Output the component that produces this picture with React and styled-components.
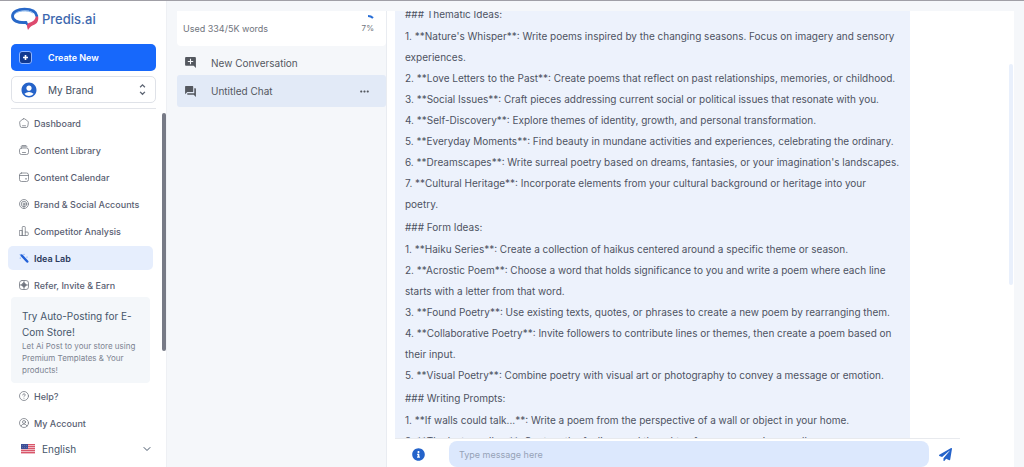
import React from "react";
import styled, { createGlobalStyle } from "styled-components";
import { MdAccountCircle, MdAddComment, MdForum, MdMoreHoriz, MdUnfoldMore } from "react-icons/md";
import { FaInfoCircle, FaPaperPlane } from "react-icons/fa";
import { ChevronDown } from "lucide-react";

const GlobalStyle = createGlobalStyle`
  *, *::before, *::after { box-sizing: border-box; }
  body { margin: 0; background: #f5f7fa; }
  body, button, input, select { font-family: Inter, "Liberation Sans", sans-serif; }
  svg { display: block; flex: none; }
`;

const Page = styled.div`
  display: flex;
  height: 100vh;
  overflow: hidden;
  border-top: 1px solid #a09fa6;
  color: #4d5566;
`;

const Sidebar = styled.aside`
  flex: none;
  width: 167px;
  display: flex;
  flex-direction: column;
  background: #fff;
  border-right: 1px solid #eef0f4;
`;

const SidebarTop = styled.div`
  display: flex;
  flex-direction: column;
  gap: 5px;
  margin: 0 10px 0 11px;
  padding: 6px 0 5px;
  border-bottom: 1px solid #e3e5ea;
`;

const Logo = styled.a`
  display: flex;
  align-items: center;
  gap: 3px;
  height: 24px;
  margin-bottom: 8px;
  color: #3d68ae;
  font-size: 13px;
  font-weight: 500;
  text-decoration: none;
`;

const CreateButton = styled.button`
  display: flex;
  align-items: center;
  gap: 16px;
  height: 27px;
  padding: 0 8px;
  border: 0;
  border-radius: 5px;
  background: #1768fb;
  color: #fff;
  font-size: 9px;
  font-weight: 600;
`;

const BrandButton = styled.button`
  display: flex;
  align-items: center;
  gap: 10px;
  height: 27px;
  padding: 0 5px 0 8px;
  border: 1px solid #dfe2e8;
  border-radius: 5px;
  background: #fff;
  color: #424e60;
  font-size: 10px;
`;

const Grow = styled.span`
  flex: 1;
  text-align: left;
`;

const SidebarBody = styled.div`
  flex: 1;
  display: flex;
  justify-content: space-between;
  min-height: 0;
`;

const SidebarColumn = styled.div`
  flex: 1;
  display: flex;
  flex-direction: column;
  padding: 2px 9px 0 8px;
`;

const Nav = styled.nav`
  display: flex;
  flex-direction: column;
  gap: 3px;
`;

const NavLink = styled.a`
  display: flex;
  align-items: center;
  gap: 5px;
  height: 24px;
  padding-left: 11px;
  border-radius: 5px;
  background: ${(p) => (p.$active ? "#e6eefd" : "transparent")};
  color: ${(p) => (p.$active ? "#2b3a5c" : "#596072")};
  font-size: 9px;
  font-weight: ${(p) => (p.$active ? 600 : 500)};
  text-decoration: none;
  white-space: nowrap;
`;

const Promo = styled.section`
  margin: 0 3px 1px;
  padding: 11px 11px 7px;
  border-radius: 4px;
  background: #f4f7fa;
  white-space: nowrap;
`;

const PromoTitle = styled.h2`
  margin: 0;
  color: #46566a;
  font-size: 10px;
  font-weight: 400;
  line-height: 16px;
`;

const PromoText = styled.p`
  margin: 0;
  color: #7c8391;
  font-size: 8px;
  line-height: 12px;
`;

const Language = styled.label`
  display: flex;
  align-items: center;
  gap: 7px;
  height: 27px;
  padding-left: 13px;
  color: #46566a;
`;

const LanguageSelect = styled.select`
  flex: 1;
  padding: 0;
  border: 0;
  appearance: none;
  background: transparent;
  color: inherit;
  font-size: 10px;
`;

const Rail = styled.div`
  flex: none;
  width: 4px;
  height: ${(p) => p.$height};
  margin-top: ${(p) => p.$top};
  border-radius: 2px;
  background: ${(p) => p.$color};
`;

const Main = styled.main`
  flex: 1;
  min-width: 0;
  display: flex;
  padding: 10px 10px 0;
`;

const Conversations = styled.section`
  flex: none;
  width: 210px;
  border-right: 1px solid #e9ecf1;
`;

const Usage = styled.div`
  display: flex;
  justify-content: space-between;
  height: 35px;
  margin-bottom: 4px;
  padding: 4px 12px 0 6px;
  border-radius: 0 0 4px 4px;
  background: #fff;
  color: #70747d;
  font-size: 9px;
`;

const UsageLabel = styled.span`
  padding-top: 8px;
  line-height: 12px;
`;

const UsageMeter = styled.div`
  display: flex;
  flex-direction: column;
  align-items: flex-end;
  gap: 3px;
  font-size: 8px;
  line-height: 12px;
`;

const ConversationRow = styled.div`
  display: flex;
  align-items: center;
  height: ${(p) => (p.$selected ? "32px" : "25px")};
  padding: 0 15px 0 7px;
  border-radius: 3px;
  background: ${(p) => (p.$selected ? "#e2eaf7" : "transparent")};
  color: #54585f;
`;

const ConversationButton = styled.button`
  flex: 1;
  display: flex;
  align-items: center;
  gap: 14px;
  padding: 0;
  border: 0;
  background: none;
  color: inherit;
  font-size: 10px;
`;

const IconButton = styled.button`
  display: flex;
  padding: 0;
  border: 0;
  background: none;
  color: ${(p) => p.$color};
`;

const Chat = styled.section`
  flex: 1;
  min-width: 0;
  display: flex;
  flex-direction: column;
  background: #fff;
`;

const Messages = styled.div`
  flex: 1;
  min-height: 0;
  display: flex;
  justify-content: space-between;
  padding: 0 1px 0 8px;
  overflow: hidden;
`;

const Bubble = styled.article`
  flex: 0 1 515px;
  display: flex;
  flex-direction: column;
  gap: 1px;
  margin-top: -8px;
  padding: 0 10px;
  background: #edf2fc;
  color: #4d5362;
  font-size: 10px;
  line-height: 21px;
  white-space: nowrap;
`;

const Topic = styled.section`
  flex: none;
`;

const TopicTitle = styled.h3`
  margin: 0;
  padding: 1px 0;
  font-size: inherit;
  font-weight: 400;
`;

const Line = styled.p`
  margin: 0;
  white-space: pre-line;
`;

const Composer = styled.form`
  display: flex;
  align-items: center;
  gap: 10px;
  margin: 0 54px 0 8px;
  padding: 2px 8px 0 17px;
  border-top: 1px solid #e8eaee;
`;

const MessageInput = styled.input`
  flex: 1;
  min-width: 0;
  height: 26px;
  margin-left: 14px;
  padding: 0 10px;
  border: 0;
  border-radius: 8px;
  background: #dce8fd;
  color: #4d5362;
  font-size: 9px;
  &::placeholder { color: #96a2b7; opacity: 1; }
`;

const PredisMark = () => (
  <svg width="28" height="24" viewBox="0 0 28 24" fill="none" aria-hidden="true">
    <path d="M15 15.500C6 16 1.500 13.500 1.500 9C1.500 4.500 7 2.200 13.500 2.200C20 2.200 25 4.500 25.800 9" stroke="#2868c8" strokeWidth="2.800" strokeLinecap="round" />
    <path d="M3 8C5 3.500 17 2.500 22 6" stroke="#7fb0ea" strokeWidth="1" />
    <path d="M8 15L14.500 15.500L17.500 18.500" stroke="#2868c8" strokeWidth="2.200" strokeLinecap="round" strokeLinejoin="round" />
    <path d="M27.200 9.500C28 15.500 24.500 17.500 21.500 18.500C19.500 19.300 18.500 21 17 23C16.300 20.500 15.500 18.500 16.500 17C18.500 14.500 23.500 16 24.800 9.500Z" fill="#dd4a6e" />
  </svg>
);

const PlusTile = () => (
  <svg width="13" height="13" viewBox="0 0 13 13" aria-hidden="true">
    <rect x="0.500" y="0.500" width="12" height="12" rx="2.500" fill="#11398f" stroke="#8fb5ff" />
    <path d="M6.500 4v5M4 6.500h5" stroke="#fff" strokeWidth="1.600" />
  </svg>
);

const Glyph = ({ children }) => (
  <svg width="10" height="10" viewBox="0 0 20 20" fill="none" stroke="#70757f" strokeWidth="1.500" strokeLinecap="round" strokeLinejoin="round" aria-hidden="true">
    {children}
  </svg>
);

const glyphs = {
  home: <path d="M8.500 1.800L2.500 6.200Q1 7.500 1.300 9.500L2.300 16Q2.800 19 5.500 19h9Q17.200 19 17.700 16l1-6.500Q19 7.500 17.500 6.200L11.500 1.800Q10 .8 8.500 1.800ZM7 15.500h6" />,
  library: <><path d="M6 1h8M4 3.500h12" /><path d="M5 6h10q4 0 4 4v5q0 4-4 4H5q-4 0-4-4v-5q0-4 4-4ZM7 15h6" /></>,
  calendar: <><rect x="1" y="2" width="18" height="17" rx="4" /><path d="M1 7h18" /><path d="M13.500 13.500h1" strokeWidth="2.500" /></>,
  target: <><circle cx="10" cy="10" r="9" /><circle cx="10" cy="10" r="5.500" /><circle cx="10" cy="10" r="2" /><path d="M10 12v7" /></>,
  bars: <path d="M1.500 9h5v10h-5ZM6.500 19V2.500q0-1.500 1.500-1.500h3q1.500 0 1.500 1.500V19M12.500 12h4q2 0 2 2v3q0 2-2 2h-10" />,
  wand: <><path d="M5.500 5L16.500 17" stroke="#2261d8" strokeWidth="5" /><path d="M2.500 3v.1M10 2.500v.1M2.500 10v.1M16 8v.1" stroke="#6fa0f4" strokeWidth="2.500" /></>,
  gift: <><rect x="1" y="1" width="18" height="18" rx="5" /><path d="M10 1v18M1 10h18" /><path d="M10 5L15 10L10 15L5 10Z" fill="#70757f" /></>,
  help: <><circle cx="10" cy="10" r="9" /><path d="M7.500 8q0-2.500 2.500-2.500T12.500 8Q12.500 9.500 10 11M10 14.500v.1" /></>,
  account: <><circle cx="10" cy="10" r="9" /><circle cx="10" cy="8" r="3" /><path d="M4 16q2-4 6-4t6 4" /></>,
};

const Flag = () => (
  <svg width="14" height="10" viewBox="0 0 14 10" aria-hidden="true">
    <rect width="14" height="10" fill="#eeb9c2" />
    <path d="M0 .5h14M0 2.500h14M0 4.500h14M0 6.500h14M0 8.500h14" stroke="#d9566a" />
    <rect width="7" height="5" fill="#3c4f96" />
    <path d="M1 1.500h5M1 3.500h5" stroke="#7582ba" strokeWidth=".6" strokeDasharray="1 1" />
  </svg>
);

const navItems = [
  ["home", "Dashboard"],
  ["library", "Content Library"],
  ["calendar", "Content Calendar"],
  ["target", "Brand & Social Accounts"],
  ["bars", "Competitor Analysis"],
  ["wand", "Idea Lab"],
  ["gift", "Refer, Invite & Earn"],
];

const topics = [
  {
    title: "### Thematic Ideas:",
    lines: [
      "1. **Nature's Whisper**: Write poems inspired by the changing seasons. Focus on imagery and sensory\nexperiences.",
      "2. **Love Letters to the Past**: Create poems that reflect on past relationships, memories, or childhood.",
      "3. **Social Issues**: Craft pieces addressing current social or political issues that resonate with you.",
      "4. **Self-Discovery**: Explore themes of identity, growth, and personal transformation.",
      "5. **Everyday Moments**: Find beauty in mundane activities and experiences, celebrating the ordinary.",
      "6. **Dreamscapes**: Write surreal poetry based on dreams, fantasies, or your imagination's landscapes.",
      "7. **Cultural Heritage**: Incorporate elements from your cultural background or heritage into your\npoetry.",
    ],
  },
  {
    title: "### Form Ideas:",
    lines: [
      "1. **Haiku Series**: Create a collection of haikus centered around a specific theme or season.",
      "2. **Acrostic Poem**: Choose a word that holds significance to you and write a poem where each line\nstarts with a letter from that word.",
      "3. **Found Poetry**: Use existing texts, quotes, or phrases to create a new poem by rearranging them.",
      "4. **Collaborative Poetry**: Invite followers to contribute lines or themes, then create a poem based on\ntheir input.",
      "5. **Visual Poetry**: Combine poetry with visual art or photography to convey a message or emotion.",
    ],
  },
  {
    title: "### Writing Prompts:",
    lines: [
      "1. **If walls could talk...**: Write a poem from the perspective of a wall or object in your home.",
      "2. **The last goodbye**: Capture the feelings and thoughts of someone saying goodbye.",
    ],
  },
];

export default function App() {
  return (
    <>
      <GlobalStyle />
      <Page>
        <Sidebar>
          <SidebarTop>
            <Logo href="#"><PredisMark />Predis.ai</Logo>
            <CreateButton type="button"><PlusTile />Create New</CreateButton>
            <BrandButton type="button">
              <MdAccountCircle size={18} color="#2563c9" />
              <Grow>My Brand</Grow>
              <MdUnfoldMore size={15} color="#5d6573" />
            </BrandButton>
          </SidebarTop>
          <SidebarBody>
            <SidebarColumn>
              <Nav aria-label="Main">
                {navItems.map(([icon, label]) => (
                  <NavLink href="#" key={label} $active={icon === "wand"}>
                    <Glyph>{glyphs[icon]}</Glyph>{label}
                  </NavLink>
                ))}
              </Nav>
              <Promo>
                <PromoTitle>Try Auto-Posting for E-<br />Com Store!</PromoTitle>
                <PromoText>Let Ai Post to your store using<br />Premium Templates &amp; Your<br />products!</PromoText>
              </Promo>
              <Nav aria-label="Support">
                <NavLink href="#"><Glyph>{glyphs.help}</Glyph>Help?</NavLink>
                <NavLink href="#"><Glyph>{glyphs.account}</Glyph>My Account</NavLink>
              </Nav>
              <Language>
                <Flag />
                <LanguageSelect aria-label="Language" defaultValue="English">
                  <option>English</option>
                </LanguageSelect>
                <ChevronDown size={12} />
              </Language>
            </SidebarColumn>
            <Rail $height="238px" $top="4px" $color="#777a86" />
          </SidebarBody>
        </Sidebar>
        <Main>
          <Conversations>
            <Usage>
              <UsageLabel>Used 334/5K words</UsageLabel>
              <UsageMeter>
                <svg width="6" height="4" viewBox="0 0 6 4" aria-hidden="true">
                  <path d="M0 1Q3 1 5 3" fill="none" stroke="#2a6fd6" strokeWidth="2" />
                </svg>
                7%
              </UsageMeter>
            </Usage>
            <ConversationRow>
              <ConversationButton type="button"><MdAddComment size={13} />New Conversation</ConversationButton>
            </ConversationRow>
            <ConversationRow $selected>
              <ConversationButton type="button"><MdForum size={13} />Untitled Chat</ConversationButton>
              <IconButton type="button" aria-label="More" $color="#54585f"><MdMoreHoriz size={13} /></IconButton>
            </ConversationRow>
          </Conversations>
          <Chat>
            <Messages>
              <Bubble>
                {topics.map((topic) => (
                  <Topic key={topic.title}>
                    <TopicTitle>{topic.title}</TopicTitle>
                    {topic.lines.map((line) => <Line key={line}>{line}</Line>)}
                  </Topic>
                ))}
              </Bubble>
              <Rail $height="221px" $top="53px" $color="#e9f0fc" />
            </Messages>
            <Composer onSubmit={(e) => e.preventDefault()}>
              <IconButton type="button" aria-label="Information" $color="#2463ca"><FaInfoCircle size={13} /></IconButton>
              <MessageInput aria-label="Message" placeholder="Type message here" />
              <IconButton type="submit" aria-label="Send" $color="#2463ca"><FaPaperPlane size={13} /></IconButton>
            </Composer>
          </Chat>
        </Main>
      </Page>
    </>
  );
}
